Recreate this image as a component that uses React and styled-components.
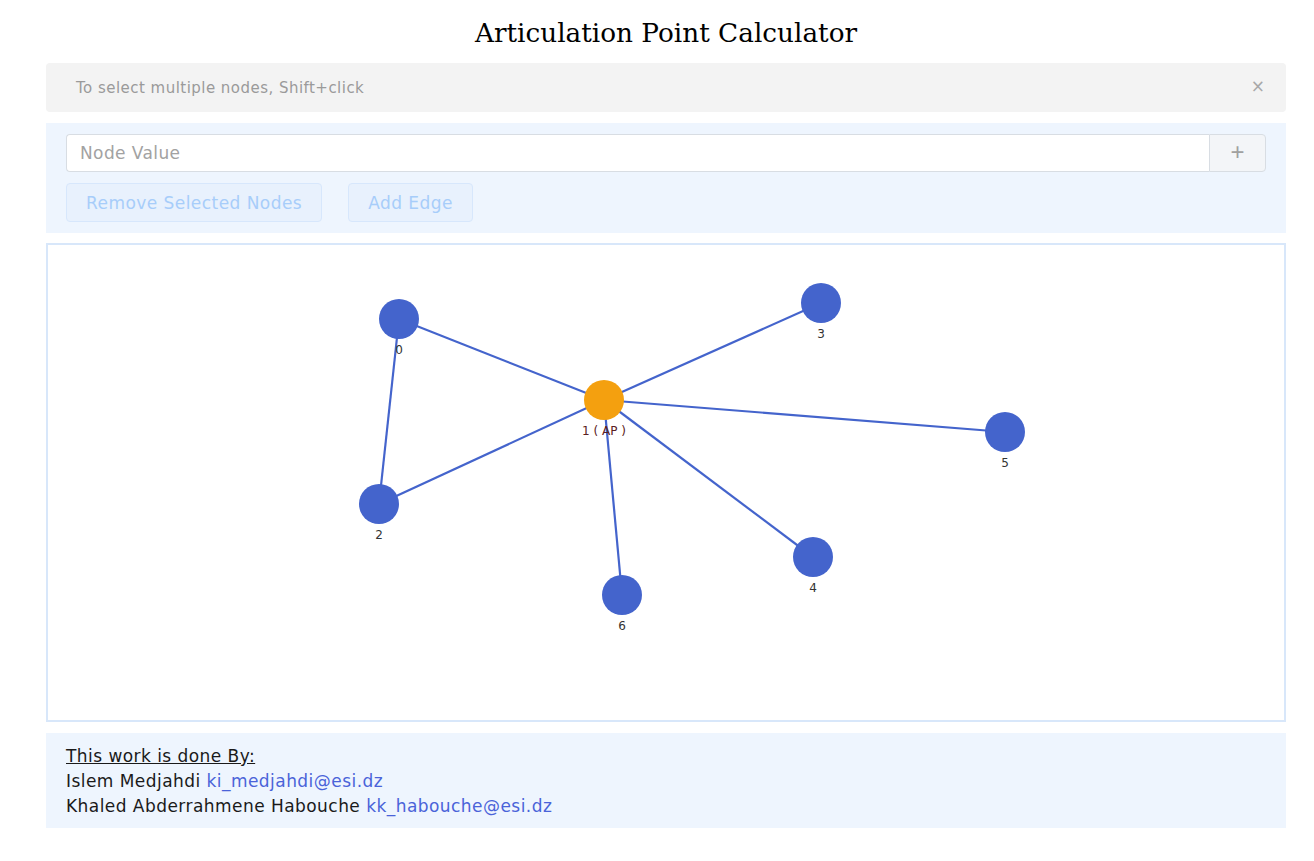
import React from 'react'
import styled, { createGlobalStyle } from 'styled-components'

const GlobalStyle = createGlobalStyle`
  *, *::before, *::after {
    box-sizing: border-box;
  }
  body {
    margin: 0;
    background: #ffffff;
    font-family: "DejaVu Sans", "Noto Sans", sans-serif;
  }
`

const Page = styled.div`
  width: 1240px;
  margin-left: 46px;
  display: flex;
  flex-direction: column;
`

const Title = styled.h1`
  margin: 15px 0 12px;
  text-align: center;
  font-family: "DejaVu Serif", "Liberation Serif", serif;
  font-weight: normal;
  font-size: 26.3px;
  line-height: 36px;
  color: #000;
`

const Alert = styled.div`
  height: 49px;
  border-radius: 4px;
  background: #f3f3f3;
  display: flex;
  align-items: center;
  justify-content: space-between;
  padding: 1px 21px 0 30px;
  font-size: 15px;
  letter-spacing: 0.47px;
  color: #9a9a9a;
`

const Close = styled.span`
  font-size: 17px;
  letter-spacing: 0;
  color: #a8a8a8;
  margin-top: -5px;
`

const Panel = styled.div`
  margin-top: 11px;
  background: #eef5fe;
  padding: 11px 20px 11px;
  display: flex;
  flex-direction: column;
  gap: 11px;
`

const InputGroup = styled.div`
  display: flex;
  height: 38px;
`

const Input = styled.input`
  flex: 1;
  border: 1px solid #d8dde3;
  border-right: none;
  border-radius: 4px 0 0 4px;
  padding: 0 13px;
  font-family: inherit;
  font-size: 17px;
  letter-spacing: 0.4px;
  background: #fff;
  outline: none;
  &::placeholder {
    color: #a2a2a2;
  }
`

const AddonButton = styled.button`
  width: 57px;
  border: 1px solid #d8dde3;
  border-radius: 0 4px 4px 0;
  background: #f3f5f8;
  color: #a0a0a0;
  font-size: 24px;
  font-weight: 300;
  line-height: 1;
  padding: 0 0 3px;
`

const Actions = styled.div`
  display: flex;
  gap: 26px;
`

const GhostButton = styled.button`
  height: 39px;
  padding: 0 19px;
  border: 1px solid #d7e7fc;
  border-radius: 4px;
  background: #e8f1fd;
  color: #a7cdfa;
  font-family: inherit;
  font-size: 17px;
  letter-spacing: 0.45px;
  font-weight: 500;
`

const Canvas = styled.div`
  margin-top: 10px;
  height: 479px;
  border: 2px solid #d8e7fa;
  position: relative;
`

const GraphSvg = styled.svg`
  display: block;
  width: 100%;
  height: 100%;
`

const Footer = styled.div`
  margin-top: 11px;
  height: 95px;
  background: #eef5fe;
  padding: 11px 20px 8px;
  font-size: 17px;
  letter-spacing: 0.45px;
  line-height: 25px;
  color: #1a1a1a;
`

const Heading = styled.div`
  text-decoration: underline;
`

const Mail = styled.a`
  color: #4a63d9;
  text-decoration: none;
`

// node centers inside the canvas border (origin at 48, 245)
const nodes = [
  { id: 0, x: 351, y: 74, label: '0' },
  { id: 1, x: 556, y: 155, label: '1 ( AP )', ap: true },
  { id: 2, x: 331, y: 259, label: '2' },
  { id: 3, x: 773, y: 58, label: '3' },
  { id: 4, x: 765, y: 312, label: '4' },
  { id: 5, x: 957, y: 187, label: '5' },
  { id: 6, x: 574, y: 350, label: '6' },
]

const edges = [[0, 1], [0, 2], [1, 2], [1, 3], [1, 5], [1, 4], [1, 6]]

const Graph = () => (
  <GraphSvg>
    {edges.map(([a, b]) => (
      <line
        key={`${a}-${b}`}
        x1={nodes[a].x} y1={nodes[a].y}
        x2={nodes[b].x} y2={nodes[b].y}
        stroke="#4464cc" strokeWidth="2.2"
      />
    ))}
    {nodes.map(n => (
      <g key={n.id}>
        <circle cx={n.x} cy={n.y} r="20" fill={n.ap ? '#f4a00f' : '#4464cc'} />
        <text
          x={n.x} y={n.y + 35}
          textAnchor="middle"
          fontSize="12"
          fontFamily="DejaVu Sans, sans-serif"
          fill={n.ap ? '#5a2020' : '#333'}
        >{n.label}</text>
      </g>
    ))}
  </GraphSvg>
)

export default function App() {
  return (
    <>
      <GlobalStyle />
      <Page>
        <Title>Articulation Point Calculator</Title>
        <Alert>
          <span>To select multiple nodes, Shift+click</span>
          <Close>×</Close>
        </Alert>
        <Panel>
          <InputGroup>
            <Input placeholder="Node Value" />
            <AddonButton>+</AddonButton>
          </InputGroup>
          <Actions>
            <GhostButton>Remove Selected Nodes</GhostButton>
            <GhostButton>Add Edge</GhostButton>
          </Actions>
        </Panel>
        <Canvas>
          <Graph />
        </Canvas>
        <Footer>
          <Heading>This work is done By:</Heading>
          <div>Islem Medjahdi <Mail href="#">ki_medjahdi@esi.dz</Mail></div>
          <div>Khaled Abderrahmene Habouche <Mail href="#">kk_habouche@esi.dz</Mail></div>
        </Footer>
      </Page>
    </>
  )
}
